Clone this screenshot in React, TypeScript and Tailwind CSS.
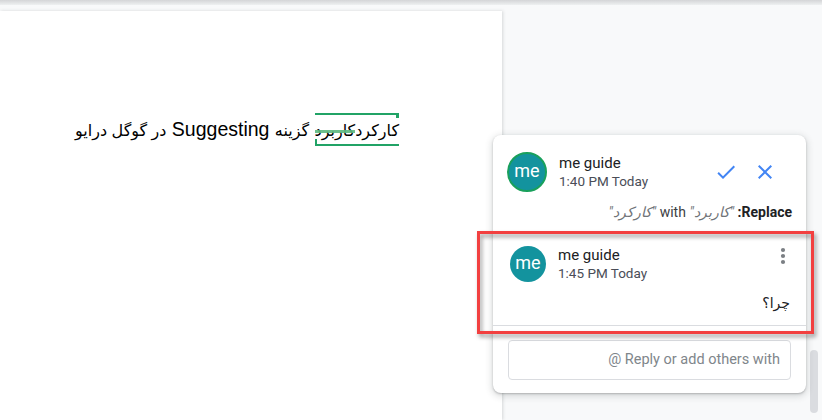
import React from "react";

function CheckIcon() {
  return (
    <svg width="24" height="24" viewBox="0 0 24 24" fill="#4285f4">
      <path d="M9 16.17L4.83 12l-1.42 1.41L9 19 21 7l-1.41-1.41z" />
    </svg>
  );
}

function CloseIcon() {
  return (
    <svg width="24" height="24" viewBox="0 0 24 24" fill="#4285f4">
      <path d="M19 6.41L17.59 5 12 10.59 6.41 5 5 6.41 10.59 12 5 17.59 6.41 19 12 13.41 17.59 19 19 17.59 13.41 12z" />
    </svg>
  );
}

function MoreVert() {
  return (
    <svg width="6" height="18" viewBox="0 0 6 18" fill="#7b7f84">
      <circle cx="3" cy="3" r="2.1" />
      <circle cx="3" cy="9" r="2.1" />
      <circle cx="3" cy="15" r="2.1" />
    </svg>
  );
}

export default function App() {
  return (
    <div
      className="relative w-[822px] h-[420px] overflow-hidden bg-[#f8f9fa] flex flex-col"
      style={{ fontFamily: "Roboto, 'Liberation Sans', sans-serif" }}
    >
      {/* top shadow band */}
      <div className="h-[5px] bg-gradient-to-b from-[#d4d5d7] to-[#eef0f1] shrink-0" />
      <div className="flex flex-1 pt-[6px] bg-[#f8f9fa]">
        {/* document page */}
        <div className="w-[502px] shrink-0 bg-white shadow-[1px_0_3px_rgba(60,64,67,0.18)] relative">
          <div
            dir="rtl"
            className="pt-[103px] pr-[103px] text-[19.5px] leading-[30px] text-black whitespace-nowrap"
            style={{ fontFamily: "'Liberation Sans', 'DejaVu Sans', sans-serif" }}
          >
            <span className="relative inline-block text-[16px] leading-[30px]">
              <span className="absolute left-0 right-0 top-[-3px] h-[2px] bg-[#21a366]" />
              <span className="absolute right-0 top-[-3px] w-[3px] h-[5px] bg-[#21a366]" />
              <span className="absolute left-0 right-0 bottom-0 h-[2px] bg-[#21a366]" />
              <span className="absolute left-0 bottom-0 w-[2px] h-[7px] bg-[#21a366]" />
              <span>کارکرد</span>
              <span className="relative inline-block">
                کاربرد
                <span className="absolute left-0 right-0 top-[14px] h-[3px] bg-[#5cb87f] opacity-90" />
              </span>
            </span>{" "}
            <span className="text-[16px]">گزینه</span> Suggesting{" "}
            <span className="text-[16px]">در گوگل درایو</span>
          </div>
        </div>

        {/* comments side */}
        <div className="flex-1 flex items-start">
          <div className="-ml-[9px] mt-[124px] w-[313px] shrink-0 bg-white rounded-[8px] shadow-[0_1px_2px_rgba(60,64,67,0.3),0_2px_6px_2px_rgba(60,64,67,0.15)] relative">
            {/* comment 1 */}
            <div className="pl-[14px] pr-[14px] pt-[17px] pb-[9px]">
              <div className="flex items-center">
                <div className="w-[40px] h-[40px] rounded-full border-2 border-[#19a05c] bg-[#13939e] flex items-center justify-center text-white text-[18px] leading-none pb-[2px]">
                  me
                </div>
                <div className="ml-[12px] flex flex-col">
                  <span className="text-[15px] leading-[18px] text-[#202124]">me guide</span>
                  <span className="text-[13.5px] leading-[18px] text-[#4a4d57]">1:40 PM Today</span>
                </div>
                <div className="ml-auto mr-[15px] flex items-center gap-[15px]">
                  <CheckIcon />
                  <CloseIcon />
                </div>
              </div>
              <div dir="rtl" className="mt-[10px] text-[14px] leading-[20px] text-[#3c4043] text-right">
                <b className="font-bold text-[#202124]">Replace:</b>{" "}
                <i className="text-[#6f7378]">"کاربرد"</i> with <i className="text-[#6f7378]">"کارکرد"</i>
              </div>
            </div>

            {/* comment 2 */}
            <div className="border-b border-[#dadce0] pl-[17px] pr-[20px] pt-[15px] pb-[12px]">
              <div className="flex items-center">
                <div className="w-[36px] h-[36px] rounded-full bg-[#13939e] flex items-center justify-center text-white text-[18px] leading-none pb-[2px]">
                  me
                </div>
                <div className="ml-[12px] flex flex-col">
                  <span className="text-[15px] leading-[18px] text-[#202124]">me guide</span>
                  <span className="text-[13.5px] leading-[18px] text-[#4a4d57]">1:45 PM Today</span>
                </div>
                <div className="ml-auto self-start mt-[1px]">
                  <MoreVert />
                </div>
              </div>
              <div
                dir="rtl"
                className="mt-[11px] text-[14px] leading-[20px] text-[#202124] text-right -mr-[4px]"
                style={{ fontFamily: "'DejaVu Sans', sans-serif" }}
              >
                چرا؟
              </div>
            </div>

            {/* reply input */}
            <div className="px-[15px] pt-[14px] pb-[13px]">
              <div
                dir="rtl"
                className="h-[40px] border border-[#dadce0] rounded-[4px] flex items-center pr-[10px] text-[14.5px] text-[#80868b]"
              >
                Reply or add others with @
              </div>
            </div>
          </div>

          {/* scrollbar */}
          <div className="ml-[4px] mt-[339px] w-[8px] h-[63px] rounded-full bg-[#dadce0] shrink-0" />
        </div>
      </div>

      {/* red annotation box */}
      <div className="absolute left-[477px] top-[231px] w-[337px] h-[103px] border-[3px] border-[#f24040] [filter:drop-shadow(2px_3px_2px_rgba(0,0,0,0.4))]" />
    </div>
  );
}
